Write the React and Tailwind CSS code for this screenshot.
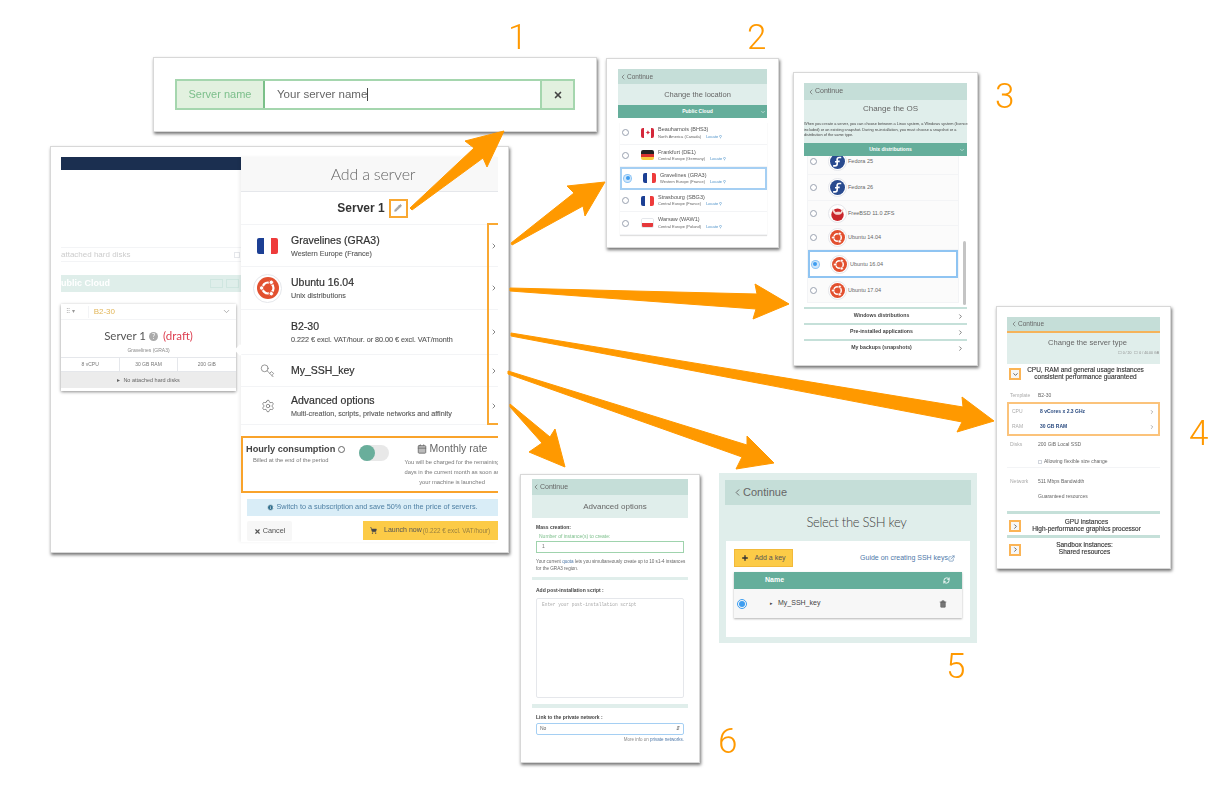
import { Calendar, ChevronDown, ChevronLeft, ChevronRight, ExternalLink, Info, Key, Pencil, Plus, RefreshCw, Settings, ShoppingCart, Trash2, X } from "lucide-react";

const ORANGE = "#ff9900";

const arrows = [
  "410,208 474,148 465,141 504,131 487,167 483,158 412,210",
  "511,243 574,193 567,186 605,182 585,216 583,206 512,245",
  "510,288 757,294 755,284 789,304 753,319 756,309 510,291",
  "511,333 963,407 962,397 994,421 957,432 962,422 511,336",
  "508,371 747,445 747,436 774,463 736,469 742,457 508,374",
  "510,404 550,437 555,429 565,467 529,452 542,443 510,407",
];

function UbuntuLogo({ size = 15 }) {
  return (
    <svg width={size} height={size} viewBox="0 0 24 24" className="shrink-0">
      <circle cx="12" cy="12" r="12" fill="#e2502f" />
      <circle cx="12" cy="12" r="6" fill="none" stroke="#fff" strokeWidth="2.4" />
      <circle cx="5" cy="12" r="2.4" fill="#fff" stroke="#e2502f" strokeWidth="1" />
      <circle cx="15.6" cy="5.8" r="2.4" fill="#fff" stroke="#e2502f" strokeWidth="1" />
      <circle cx="15.6" cy="18.2" r="2.4" fill="#fff" stroke="#e2502f" strokeWidth="1" />
    </svg>
  );
}

function FedoraLogo({ size = 15 }) {
  return (
    <svg width={size} height={size} viewBox="0 0 24 24" className="shrink-0">
      <circle cx="12" cy="12" r="12" fill="#294b8f" />
      <path d="M18 5.5h-3.2c-2 0-3.4 1.4-3.4 3.4v3.4H8M15.5 11.8h-4v3.8c0 2-1.4 3.4-3.4 3.4H5" fill="none" stroke="#fff" strokeWidth="2.6" />
    </svg>
  );
}

function BsdLogo({ size = 15 }) {
  return (
    <svg width={size} height={size} viewBox="0 0 24 24" className="shrink-0">
      <circle cx="12" cy="14" r="10" fill="#c9262c" />
      <path d="M3 5c3 0 5 3 6 5 3-1 6-1 8 0 1-3 3-6 5-6-1 4-2 8-5 9-4 2-9 1-11-2-1-2-2-4-3-6z" fill="#f3d6d2" />
    </svg>
  );
}

function LogoRing({ children }) {
  return (
    <span className="flex h-[19px] w-[19px] shrink-0 items-center justify-center rounded-full border border-gray-200 bg-white">
      {children}
    </span>
  );
}

function Flag({ code, className = "h-[10px] w-[13px]" }) {
  if (code === "de") {
    return (
      <span className={`flex flex-col overflow-hidden rounded-[2px] ${className}`}>
        <span className="flex-1 bg-[#222]" />
        <span className="flex-1 bg-[#d8332f]" />
        <span className="flex-1 bg-[#f5c93c]" />
      </span>
    );
  }
  if (code === "pl") {
    return (
      <span className={`flex flex-col overflow-hidden rounded-[2px] border border-gray-200 ${className}`}>
        <span className="flex-1 bg-white" />
        <span className="flex-1 bg-[#e5383b]" />
      </span>
    );
  }
  if (code === "ca") {
    return (
      <span className={`flex items-center overflow-hidden rounded-[2px] bg-white ${className}`}>
        <span className="h-full w-1/4 bg-[#d4283a]" />
        <span className="flex flex-1 items-center justify-center text-[7px] leading-none text-[#d4283a]">✦</span>
        <span className="h-full w-1/4 bg-[#d4283a]" />
      </span>
    );
  }
  return (
    <span className={`flex overflow-hidden rounded-[2px] ${className}`}>
      <span className="flex-1 bg-[#1c3f94]" />
      <span className="flex-1 bg-white" />
      <span className="flex-1 bg-[#ee3b3b]" />
    </span>
  );
}

function Radio({ checked }) {
  return checked ? (
    <span className="flex h-[7px] w-[7px] shrink-0 items-center justify-center rounded-full bg-[#cfe6fb] ring-1 ring-[#8cc4f5]">
      <span className="h-[4px] w-[4px] rounded-full bg-[#3d9df0]" />
    </span>
  ) : (
    <span className="h-[7px] w-[7px] shrink-0 rounded-full border border-gray-400 bg-white" />
  );
}

function Continue({ className, iconSize = 8 }) {
  return (
    <div className={`flex items-center bg-[#c5ded8] text-[#666] ${className}`}>
      <ChevronLeft size={iconSize} strokeWidth={2} />
      <span>Continue</span>
    </div>
  );
}

function Location({ code, name, zone, selected }) {
  return (
    <div
      className={`flex h-[22.6px] items-center bg-white ${
        selected ? "border-2 border-[#a5cff3]" : "border-b border-gray-100"
      }`}
    >
      <span className="flex w-[21px] shrink-0 pl-[2px]"><Radio checked={selected} /></span>
      <Flag code={code} />
      <div className="ml-[4px] leading-none">
        <p className="text-[5.5px] text-[#555]">{name}</p>
        <p className="mt-[2px] flex items-center text-[4px] text-[#666]">
          {zone}
          <span className="ml-[5px] text-[#4a90c8]">Locate ⚲</span>
        </p>
      </div>
    </div>
  );
}

function OsRow({ logo, name, selected, className = "h-[26px]" }) {
  return (
    <div
      className={`flex items-center ${className} ${
        selected ? "border-2 border-[#8fc4f2] bg-white" : "border-b border-gray-100 bg-[#fbfbfb]"
      }`}
    >
      <span className="flex w-[10px] justify-center"><Radio checked={selected} /></span>
      <span className="ml-[10px]"><LogoRing>{logo}</LogoRing></span>
      <span className="ml-[1px] text-[5.5px] text-[#666]">{name}</span>
    </div>
  );
}

function Accordion({ children }) {
  return (
    <div className="border-t-[2px] border-[#c5e0d9]">
      <div className="flex h-[14px] items-center pl-[2px] pr-[3px] text-[5.2px] font-bold text-[#444]">
        <span className="flex-1 text-center">{children}</span>
        <ChevronRight size={7} strokeWidth={2.5} className="text-[#555]" />
      </div>
    </div>
  );
}

function OrangeBox({ children, className = "" }) {
  return (
    <span className={`flex items-center justify-center border-2 border-[#fbb455] bg-[#f7f7f7] text-[#555] ${className}`}>
      {children}
    </span>
  );
}

function SpecRow({ label, children, className = "" }) {
  return (
    <div className={`flex items-center text-[5px] ${className}`}>
      <span className="w-[31px] pl-[3px] text-[#aaa]">{label}</span>
      <div className="flex-1 text-[#666]">{children}</div>
    </div>
  );
}

function HomeView() {
  return (
    <div className="flex h-full blur-[0.3px]">
      <div className="flex w-[180px] shrink-0 flex-col">
        <div className="h-[13px] bg-[#1b2f50]" />
        <div className="mt-[77px] flex h-[15px] items-center justify-between overflow-hidden border-y border-gray-100 pr-[1px] text-[8px] text-[#ccc]">
          <span>attached hard disks</span>
          <span className="h-[6px] w-[6px] border border-gray-200" />
        </div>
        <div className="mt-[13px] flex h-[17px] items-center justify-between overflow-hidden bg-[#dfeeea] pr-[2px]">
          <span className="-ml-[6px] text-[9px] font-bold text-white">Public Cloud</span>
          <span className="flex gap-[3px]">
            <span className="h-[9px] w-[13px] border border-[#cfe6e0]" />
            <span className="h-[9px] w-[13px] border border-[#cfe6e0]" />
          </span>
        </div>
        <div className="mt-[12px] h-[87px] w-[175px] bg-white shadow-[0_1px_3px_rgba(0,0,0,0.45)]">
          <div className="flex h-[16px] items-center border-b border-gray-100 pl-[5px] pr-[5px] text-[#999]">
            <span className="text-[6px]">⠿ ▾</span>
            <span className="ml-[13px] flex-1 border-l border-gray-100 pl-[5px] text-[8px] text-[#e2b659]">B2-30</span>
            <ChevronDown size={9} />
          </div>
          <div className="flex h-[24px] items-center justify-center pt-[8px] font-['Lato',sans-serif] text-[11.5px] text-[#555]">
            <span>Server 1</span>
            <span className="ml-[3px] flex h-[9px] w-[9px] items-center justify-center rounded-full bg-[#aaa] text-[7px] text-white">?</span>
            <span className="ml-[5px] text-[#dd3f50]">(draft)</span>
          </div>
          <p className="mt-[2px] text-center text-[5px] leading-[8px] text-[#888]">Gravelines (GRA3)</p>
          <div className="mt-[3px] grid h-[15px] grid-cols-3 border-y border-gray-200 text-center text-[5px] leading-[13px] text-[#777]">
            <span>8 vCPU</span>
            <span className="border-x border-gray-200">30 GB RAM</span>
            <span>200 GiB</span>
          </div>
          <div className="flex h-[16px] items-center justify-center bg-[#ececec] text-[5.5px] text-[#666]">▸&nbsp;&nbsp;No attached hard disks</div>
        </div>
      </div>

      <div className="relative flex w-[257px] shrink-0 flex-col bg-white shadow-[-2px_0_3px_rgba(0,0,0,0.06)]">
        <span className="absolute -left-[5px] top-[189px] h-[8px] w-[8px] rotate-45 bg-white" />
        <div className="flex h-[35px] items-center justify-center border-b border-gray-200 bg-[#f8f8f8] pl-[7px] font-['Lato',sans-serif] text-[16px] font-light tracking-[-0.2px] text-[#666]">
          Add a server
        </div>
        <div className="flex h-[33px] items-center justify-center border-b border-gray-100 pl-[6px] text-[12px] font-bold text-[#333]">
          <span>Server 1</span>
          <span className="ml-[4px] flex h-[19px] w-[19px] items-center justify-center border-2 border-[#f9a832] text-[#999]">
            <Pencil size={8} fill="#aaa" />
          </span>
        </div>
        <MainRow className="h-[42px]" icon={<Flag code="fr" className="h-[16px] w-[21px]" />} title="Gravelines (GRA3)" sub="Western Europe (France)" />
        <MainRow
          className="h-[43px]"
          icon={<span className="flex h-[29px] w-[29px] items-center justify-center rounded-full border border-gray-200"><UbuntuLogo size={22} /></span>}
          title="Ubuntu 16.04"
          sub="Unix distributions"
        />
        <MainRow className="h-[45px]" title="B2-30" sub="0.222 € excl. VAT/hour. or 80.00 € excl. VAT/month" />
        <MainRow className="h-[32px]" icon={<Key size={15} strokeWidth={1.2} className="-scale-y-100 text-[#777]" />} title="My_SSH_key" />
        <MainRow className="h-[38px]" icon={<Settings size={14} strokeWidth={1.2} className="text-[#666]" />} title="Advanced options" sub="Multi-creation, scripts, private networks and affinity" />
        <span className="absolute left-[246px] top-[66px] h-[202px] w-[11px] border-y-2 border-l-2 border-[#f9a832]" />

        <div className="mt-[11px] flex h-[57px] overflow-hidden border-y-2 border-l-2 border-[#f9a32b]">
          <div className="w-[116px] shrink-0 pl-[3px] pt-[5px]">
            <p className="flex items-center text-[9.2px] font-bold leading-[12px] text-[#444]">
              Hourly consumption
              <span className="ml-[3px] h-[7px] w-[7px] rounded-full border border-[#666]" />
            </p>
            <p className="ml-[7px] mt-[1px] text-[5.8px] text-[#777]">Billed at the end of the period</p>
          </div>
          <div className="mt-[7px] flex h-[16px] w-[30px] shrink-0 items-center rounded-full bg-[#e8e8e8]">
            <span className="h-[16px] w-[16px] rounded-full bg-[#69ae9b]" />
          </div>
          <div className="ml-[5px] w-[116px] shrink-0 text-center">
            <p className="mt-[4px] flex items-center justify-center gap-[3px] text-[10.5px] leading-[13px] text-[#666]">
              <Calendar size={10} fill="#bbb" />
              Monthly rate
            </p>
            <p className="mt-[2px] whitespace-nowrap text-[5.8px] leading-[10px] text-[#777]">
              You will be charged for the remaining<br />days in the current month as soon as<br />your machine is launched
            </p>
          </div>
        </div>
        <div className="ml-[6px] mt-[6px] flex h-[17px] items-center justify-center bg-[#d9edf7] text-[7.3px] text-[#4d7fa3]">
          <Info size={7} fill="#31708f" className="mr-[2px] text-white" />
          Switch to a subscription and save 50% on the price of servers.
        </div>
        <div className="ml-[6px] mt-[5px] flex items-start justify-between">
          <button className="flex h-[20px] w-[45px] items-center justify-center rounded-[2px] bg-[#f7f7f7] text-[7.3px] text-[#555]">
            <X size={7} strokeWidth={4} className="mr-[2px]" />Cancel
          </button>
          <button className="flex h-[19px] w-[135px] items-center bg-[#fccb47] pl-[7px] text-[7px] text-[#555]">
            <ShoppingCart size={7} fill="#444" className="mr-[7px]" />Launch now
            <span className="ml-[1px] text-[6.3px] text-[#998040]">(0.222 € excl. VAT/hour)</span>
          </button>
        </div>
      </div>
    </div>
  );
}

function MainRow({ icon, title, sub, className }) {
  return (
    <div className={`flex items-center border-b border-gray-100 ${className}`}>
      <span className="flex w-[50px] shrink-0 justify-center pl-[3px]">{icon}</span>
      <div className="flex-1">
        <p className="text-[10.5px] font-medium leading-[13px] text-[#333] [-webkit-text-stroke:0.2px_#333]">{title}</p>
        {sub && <p className="mt-[2px] text-[7.2px] leading-[9px] text-[#555] [-webkit-text-stroke:0.1px_#555]">{sub}</p>}
      </div>
      <ChevronRight size={8} strokeWidth={3} className="text-[#888]" />
    </div>
  );
}

function Window({ className, children }) {
  return (
    <div className={`absolute overflow-hidden border border-[#d8d8d8] bg-white shadow-[1px_2px_3px_rgba(0,0,0,0.55)] ${className}`}>
      {children}
    </div>
  );
}

export default function App() {
  return (
    <div className="relative h-[786px] w-[1225px] overflow-hidden bg-white font-['Liberation_Sans',sans-serif]">
      {/* 1 - server name */}
      <Window className="left-[153px] top-[57px] h-[75px] w-[444px] px-[21px] pt-[21px]">
        <div className="flex h-[31px] w-[400px] border-2 border-[#a5d6ae] text-[11px] blur-[0.3px]">
          <div className="flex w-[88px] items-center justify-center border-r-2 border-[#7bc089] bg-[#e2f1df] text-[#7cbf8b]">Server name</div>
          <div className="flex flex-1 items-center pl-[12px] text-[11.5px] text-[#666]">Your server name<span className="h-[13px] w-px bg-[#444]" /></div>
          <div className="flex w-[33px] items-center justify-center border-l-2 border-[#a5d6ae] bg-[#e2f1df] text-[#444]"><X size={10} strokeWidth={4} /></div>
        </div>
      </Window>

      {/* home panel */}
      <Window className="left-[50px] top-[146px] h-[407px] w-[459px] pl-[10px] pt-[10px]">
        <div className="h-[385px]"><HomeView /></div>
      </Window>

      {/* 2 - location */}
      <Window className="left-[606px] top-[58px] h-[190px] w-[173px] px-[11px] pt-[10px]">
        <div className="blur-[0.5px]">
          <Continue className="h-[15px] pl-[1px] text-[6.5px]" />
          <div className="flex h-[21px] items-center justify-center bg-[#e0eeeb] pl-[10px] text-[7.5px] text-[#666]">Change the location</div>
          <div className="relative flex h-[13px] items-center justify-center bg-[#65ae9b] pl-[10px] text-[5px] font-bold text-white">
            Public Cloud
            <ChevronDown size={6} className="absolute right-[1px]" />
          </div>
          <div className="ml-[2px] mt-[4px] w-[147px] shadow-[0_1px_1px_rgba(0,0,0,0.12)]">
            <Location code="ca" name="Beauharnois (BHS3)" zone="North America (Canada)" />
            <Location code="de" name="Frankfurt (DE1)" zone="Central Europe (Germany)" />
            <Location code="fr" name="Gravelines (GRA3)" zone="Western Europe (France)" selected />
            <Location code="fr" name="Strasbourg (SBG3)" zone="Central Europe (France)" />
            <Location code="pl" name="Warsaw (WAW1)" zone="Central Europe (Poland)" />
          </div>
        </div>
      </Window>

      {/* 3 - os */}
      <Window className="left-[793px] top-[72px] h-[294px] w-[185px] px-[10px] pt-[10px]">
        <div className="blur-[0.5px]">
          <Continue className="h-[17px] pl-[3px] text-[7px]" />
          <div className="h-[43px] bg-[#e0eeeb] text-center">
            <p className="pl-[10px] pt-[2px] text-[8px] leading-[14px] text-[#666]">Change the OS</p>
            <p className="mt-[6px] whitespace-nowrap text-left text-[3.85px] leading-[5.5px] text-[#444]">
              When you create a server, you can choose between a Linux system, a Windows system (licence<br />
              included) or an existing snapshot. During re-installation, you must choose a snapshot or a<br />
              distribution of the same type.
            </p>
          </div>
          <div className="relative flex h-[13px] items-center justify-center bg-[#65ae9b] pl-[10px] text-[5px] font-bold text-white">
            Unix distributions
            <ChevronDown size={6} className="absolute right-[2px]" />
          </div>
          <div className="relative h-[149px] overflow-hidden">
            <div className="-mt-[7px] ml-[3px] w-[152px] border-x border-gray-100">
              <OsRow logo={<FedoraLogo />} name="Fedora 25" />
              <OsRow logo={<FedoraLogo />} name="Fedora 26" />
              <OsRow className="h-[25px]" logo={<BsdLogo />} name="FreeBSD 11.0 ZFS" />
              <OsRow className="h-[24px]" logo={<UbuntuLogo />} name="Ubuntu 14.04" />
              <OsRow className="h-[28px]" logo={<UbuntuLogo />} name="Ubuntu 16.04" selected />
              <OsRow className="h-[25px]" logo={<UbuntuLogo />} name="Ubuntu 17.04" />
            </div>
            <span className="absolute right-[1px] top-[85px] h-[64px] w-[3px] rounded-full bg-[#c4c4c4]" />
          </div>
          <div className="mt-[2px]">
            <Accordion>Windows distributions</Accordion>
            <Accordion>Pre-installed applications</Accordion>
            <Accordion>My backups (snapshots)</Accordion>
          </div>
        </div>
      </Window>

      {/* 4 - server type */}
      <Window className="left-[996px] top-[306px] h-[263px] w-[175px] px-[10px] pt-[10px]">
        <div className="blur-[0.5px]">
          <Continue className="h-[14px] pl-[3px] text-[6.5px]" />
          <div className="h-[2px] bg-[#f5b35a]" />
          <div className="h-[31px] bg-[#e0eeeb] text-center">
            <p className="pl-[8px] pt-[4px] text-[7.6px] leading-[12px] text-[#666]">Change the server type</p>
            <p className="pr-[1px] text-right text-[3.5px] leading-[8px] text-[#888]">☐ 0 / 20 &nbsp; ☐ 0 / 40.00 GB</p>
          </div>
          <div className="mt-[1px] flex h-[16px] items-center">
            <OrangeBox className="ml-[2px] mt-[2px] h-[12px] w-[12px] shrink-0"><ChevronDown size={7} strokeWidth={3} /></OrangeBox>
            <p className="flex-1 pr-[10px] text-center text-[6.5px] font-medium leading-[7px] text-[#333] [-webkit-text-stroke:0.15px_#444]">CPU, RAM and general usage instances<br />consistent performance guaranteed</p>
          </div>
          <SpecRow className="mt-[9px] h-[12px]" label="Template">B2-30</SpecRow>
          <div className="flex h-[34px] flex-col border-2 border-[#fbc37b]">
            <SpecRow className="h-[15px]" label="CPU">
              <div className="flex items-center justify-between pr-[3px] font-bold text-[#2a4b80]">8 vCores x 2.3 GHz <ChevronRight size={6} className="text-[#666]" /></div>
            </SpecRow>
            <SpecRow className="h-[15px]" label="RAM">
              <div className="flex items-center justify-between pr-[3px] font-bold text-[#2a4b80]">30 GB RAM <ChevronRight size={6} className="text-[#666]" /></div>
            </SpecRow>
          </div>
          <SpecRow className="mt-[3px] h-[12px]" label="Disks">200 GiB Local SSD</SpecRow>
          <SpecRow className="mt-[5px] h-[12px] border-b border-gray-100" label=""><span className="flex items-center gap-[2px]"><span className="h-[4px] w-[4px] border border-gray-300" />Allowing flexible size change</span></SpecRow>
          <SpecRow className="mt-[8px] h-[12px]" label="Network">511 Mbps Bandwidth</SpecRow>
          <SpecRow className="mt-[3px] h-[12px]" label="">Guaranteed resources</SpecRow>
          <div className="mt-[8px] h-[3px] bg-[#c5e0d9]" />
          <div className="flex h-[21px] items-center">
            <OrangeBox className="ml-[2px] mt-[3px] h-[12px] w-[12px] shrink-0"><ChevronRight size={7} strokeWidth={3} /></OrangeBox>
            <p className="flex-1 pr-[8px] text-center text-[6.5px] font-medium leading-[7px] text-[#333] [-webkit-text-stroke:0.15px_#444]">GPU instances<br />High-performance graphics processor</p>
          </div>
          <div className="h-[3px] bg-[#c5e0d9]" />
          <div className="flex h-[20px] items-center">
            <OrangeBox className="ml-[2px] mt-[3px] h-[12px] w-[12px] shrink-0"><ChevronRight size={7} strokeWidth={3} /></OrangeBox>
            <p className="flex-1 pr-[12px] text-center text-[6.5px] font-medium leading-[7px] text-[#333] [-webkit-text-stroke:0.15px_#444]">Sandbox instances:<br />Shared resources</p>
          </div>
        </div>
      </Window>

      {/* 5 - ssh key */}
      <div className="absolute left-[719px] top-[473px] h-[170px] w-[258px] bg-[#e0eeeb] px-[6px] pt-[7px]">
        <Continue className="h-[25px] pl-[7px] text-[11px]" iconSize={11} />
        <p className="mt-[5px] h-[24px] pl-[17px] text-center font-['Lato',sans-serif] text-[13px] font-light leading-[24px] tracking-[-0.3px] text-[#444]">Select the SSH key</p>
        <div className="mx-[1px] mt-[7px] h-[96px] bg-white px-[8px] pt-[8px]">
          <div className="flex h-[18px] items-center justify-between pr-[7px]">
            <button className="flex h-[18px] w-[59px] items-center justify-center border border-[#f2b93a] bg-[#fccb47] text-[7px] text-[#555]">
              <Plus size={8} strokeWidth={4} className="mr-[5px] text-[#333]" />Add a key
            </button>
            <span className="flex items-center text-[7px] text-[#4e78a8]">Guide on creating SSH keys<ExternalLink size={7} /></span>
          </div>
          <div className="mt-[5px] w-[228px] shadow-[0_1px_2px_rgba(0,0,0,0.3)]">
            <div className="flex h-[17px] items-center justify-between bg-[#65ae9b] pl-[31px] pr-[12px] text-[7px] font-bold text-white">
              Name
              <RefreshCw size={7} strokeWidth={3} />
            </div>
            <div className="flex h-[29px] items-center bg-[#f7f7f7] pl-[3px] pr-[15px] text-[7px] text-[#444]">
              <span className="flex h-[10px] w-[10px] items-center justify-center rounded-full border-[1.5px] border-[#3d9df0]">
                <span className="h-[6px] w-[6px] rounded-full bg-[#3d9df0]" />
              </span>
              <span className="ml-[23px] text-[5px]">▸</span>
              <span className="ml-[5px] flex-1">My_SSH_key</span>
              <Trash2 size={8} strokeWidth={1.5} fill="#777" className="text-[#555]" />
            </div>
          </div>
        </div>
      </div>

      {/* 6 - advanced */}
      <Window className="left-[520px] top-[474px] h-[289px] w-[180px] px-[11px] pt-[4px]">
        <div className="blur-[0.5px]">
          <Continue className="h-[16px] text-[7px]" />
          <div className="flex h-[23px] items-center justify-center bg-[#e0eeeb] pl-[10px] text-[8px] text-[#666]">Advanced options</div>
          <div className="px-[4px]">
            <p className="mt-[6px] text-[5px] font-bold leading-[7px] text-[#444]">Mass creation:</p>
            <p className="mt-[2px] pl-[3px] text-[5px] leading-[7px] text-[#7cbf8b]">Number of instance(s) to create:</p>
            <div className="mt-[1px] flex h-[12px] items-center border border-[#9fd3ad] pl-[5px] text-[5px] text-[#777]">1</div>
            <p className="mt-[5px] whitespace-nowrap text-[4.6px] leading-[7px] text-[#666]">
              Your current <span className="text-[#4e78a8]">quota</span> lets you simultaneously create up to 10 s1-4 instances<br />for the GRA3 region.
            </p>
          </div>
          <div className="mt-[5px] h-[3px] bg-[#e0eeeb]" />
          <div className="px-[4px]">
            <p className="mt-[7px] text-[5px] font-bold leading-[7px] text-[#444]">Add post-installation script :</p>
            <div className="mt-[4px] h-[100px] rounded-[2px] border border-gray-200 px-[5px] py-[3px] font-['Liberation_Mono',monospace] text-[4.5px] text-[#aaa]">Enter your post-installation script</div>
          </div>
          <div className="mt-[6px] h-[4px] bg-[#e0eeeb]" />
          <div className="px-[4px]">
            <p className="mt-[6px] text-[5px] font-bold leading-[7px] text-[#444]">Link to the private network :</p>
            <div className="mt-[2px] flex h-[12px] items-center justify-between rounded-[2px] border border-[#a5cff3] px-[3px] text-[5px] text-[#666]">No<span className="text-[5px]">⇵</span></div>
            <p className="mt-[1px] text-right text-[4.5px] leading-[8px] text-[#888]">More info on <span className="text-[#4e78a8]">private networks.</span></p>
          </div>
        </div>
      </Window>

      {/* arrows */}
      <svg className="absolute left-0 top-0" width="1225" height="786">
        {arrows.map((points) => (
          <polygon key={points} points={points} fill={ORANGE} stroke={ORANGE} strokeWidth="1" strokeLinejoin="round" />
        ))}
      </svg>

      {/* callout numbers */}
      <span className="absolute left-[508px] top-[18px] font-['Roboto',sans-serif] text-[35px] font-light leading-[40px] text-[#ff9900]">1</span>
      <span className="absolute left-[747px] top-[18px] font-['Roboto',sans-serif] text-[35px] font-light leading-[40px] text-[#ff9900]">2</span>
      <span className="absolute left-[995px] top-[77px] font-['Roboto',sans-serif] text-[35px] font-light leading-[40px] text-[#ff9900]">3</span>
      <span className="absolute left-[1189px] top-[414px] font-['Roboto',sans-serif] text-[35px] font-light leading-[40px] text-[#ff9900]">4</span>
      <span className="absolute left-[946px] top-[647px] font-['Roboto',sans-serif] text-[35px] font-light leading-[40px] text-[#ff9900]">5</span>
      <span className="absolute left-[718px] top-[722px] font-['Roboto',sans-serif] text-[35px] font-light leading-[40px] text-[#ff9900]">6</span>
    </div>
  );
}
